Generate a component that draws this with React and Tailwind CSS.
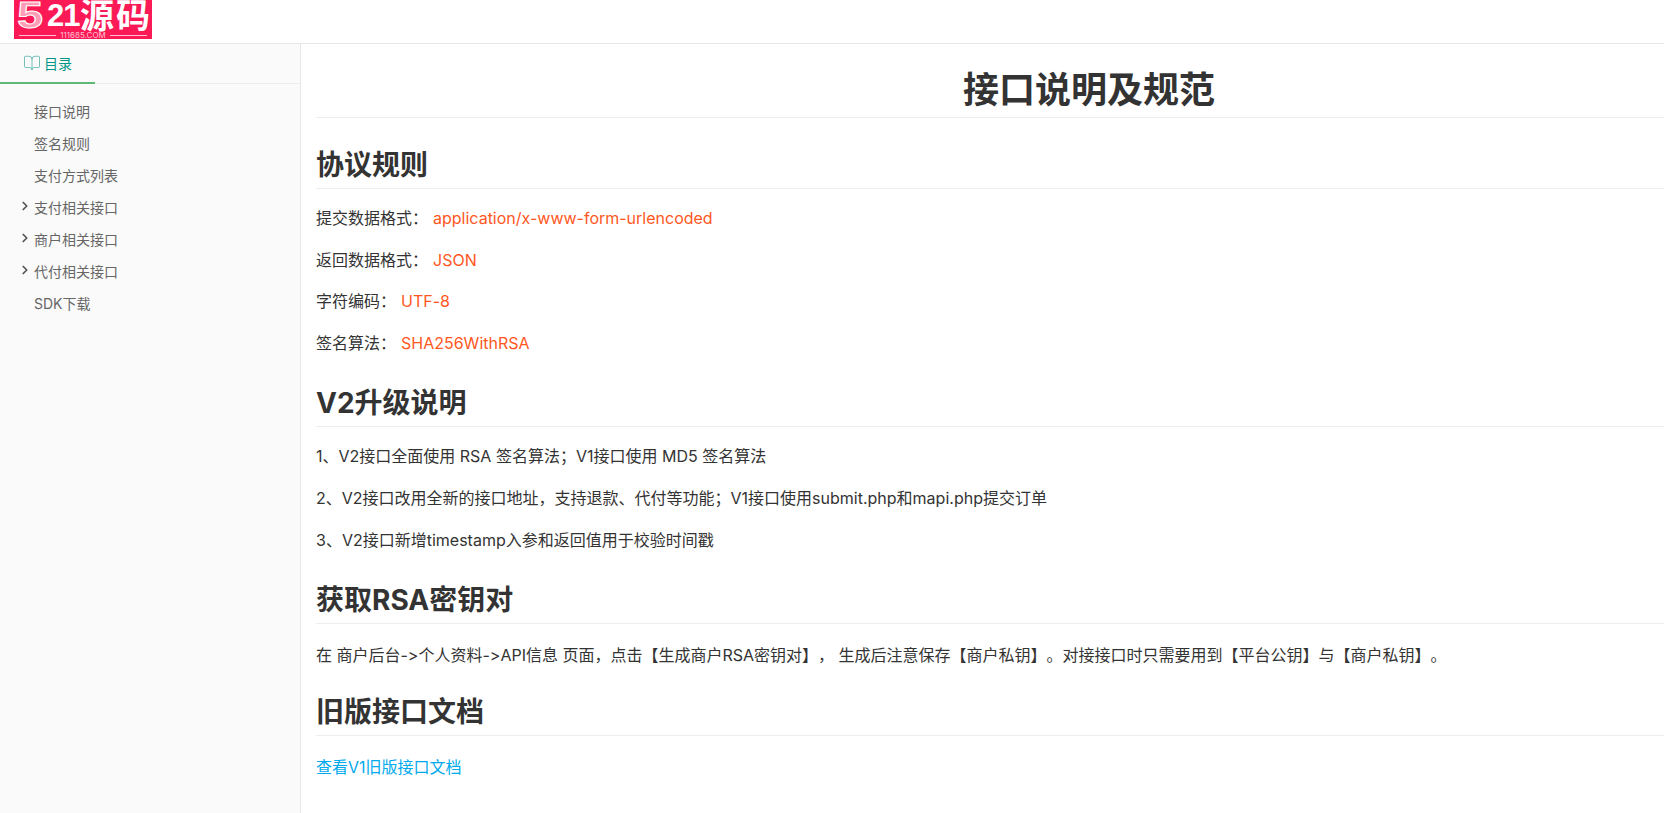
import { BookOpen, ChevronRight } from "lucide-react";

const menu = [
  { label: "接口说明" },
  { label: "签名规则" },
  { label: "支付方式列表" },
  { label: "支付相关接口", arrow: true },
  { label: "商户相关接口", arrow: true },
  { label: "代付相关接口", arrow: true },
  { label: "SDK下载" },
];

function Logo() {
  return (
    <div className="ml-[14px] flex h-[39px] w-[138px] flex-col items-center bg-[#fb1a56] text-white">
      <div className="flex h-[31px] w-full items-center pl-[4px] font-bold">
        <span className="mr-[5px] w-[24px] scale-x-125 text-center font-['Liberation_Sans'] text-[37px] leading-[31px] text-[#ff9db6] [-webkit-text-stroke:1px_white]">5</span>
        <span className="mr-[2px] w-[31px] font-['Liberation_Sans'] text-[31px] leading-[31px] tracking-[-1px]">21</span>
        <span className="text-[34px] leading-[31px] tracking-[2px]">源码</span>
      </div>
      <div className="flex h-[8px] w-[128px] items-center gap-1 text-[8px] leading-[8px] text-[#ffc0d0]">
        <span className="h-px flex-1 bg-[#ffc0d0]" />
        <span>111685.COM</span>
        <span className="h-px flex-1 bg-[#ffc0d0]" />
      </div>
    </div>
  );
}

function Sidebar() {
  return (
    <aside className="w-[301px] shrink-0 border-r border-[#e6e6e6] bg-[#fafafa]">
      <div className="h-[40px] border-b border-[#eeeeee]">
        <div className="flex h-[40px] w-[95px] items-center border-b-2 border-[#5fb878] pl-[23px] text-[14px] text-[#009688]">
          <BookOpen className="mr-[3px] h-[18px] w-[18px] text-[#6cbcb4]" strokeWidth={1.25} />
          目录
        </div>
      </div>
      <ul className="pt-[12px]">
        {menu.map((item) => (
          <li key={item.label} className="relative h-8 pl-[34px] text-[14px] leading-8 text-[#666666]">
            {item.arrow && (
              <ChevronRight className="absolute left-[18px] top-[7px] h-[14px] w-[14px] text-[#555555]" strokeWidth={3} />
            )}
            {item.label}
          </li>
        ))}
      </ul>
    </aside>
  );
}

function H2({ children, className = "mt-[26px]" }) {
  return (
    <h2 className={`mb-[17px] border-b border-[#eeeeee] pb-[3px] pt-px text-[28px] font-bold leading-[40px] text-[#333333] ${className}`}>
      {children}
    </h2>
  );
}

function P({ children, className = "my-4" }) {
  return <p className={`text-[16px] leading-[25.6px] text-[#333333] ${className}`}>{children}</p>;
}

function Val({ children }) {
  return <span className="ml-[5px] text-[#ff5722]">{children}</span>;
}

export default function App() {
  return (
    <div
      className="flex h-[813px] flex-col overflow-hidden bg-white [font-feature-settings:'calt'_0] [text-spacing-trim:space-all]"
      style={{ fontFamily: 'Inter, "Noto Sans CJK SC", sans-serif' }}
    >
      <header className="h-[44px] shrink-0 border-b border-[#e6e6e6] bg-white">
        <Logo />
      </header>
      <div className="flex min-h-0 flex-1">
        <Sidebar />
        <main className="min-w-0 flex-1 pl-[15px]">
          <h1 className="mt-[18px] border-b border-[#eeeeee] pl-[198px] pt-px text-center text-[36px] font-bold leading-[54px] text-[#333333]">
            接口说明及规范
          </h1>
          <H2>协议规则</H2>
          <P>提交数据格式：<Val>application/x-www-form-urlencoded</Val></P>
          <P>返回数据格式：<Val>JSON</Val></P>
          <P>字符编码：<Val>UTF-8</Val></P>
          <P>签名算法：<Val>SHA256WithRSA</Val></P>
          <H2>V2升级说明</H2>
          <P>1、V2接口全面使用 RSA 签名算法；V1接口使用 MD5 签名算法</P>
          <P>2、V2接口改用全新的接口地址，支持退款、代付等功能；V1接口使用submit.php和mapi.php提交订单</P>
          <P>3、V2接口新增timestamp入参和返回值用于校验时间戳</P>
          <H2>获取RSA密钥对</H2>
          <P className="mt-[19px] mb-4">在 商户后台-&gt;个人资料-&gt;API信息 页面，点击【生成商户RSA密钥对】， 生成后注意保存【商户私钥】。对接接口时只需要用到【平台公钥】与【商户私钥】。</P>
          <H2 className="mt-[22px]">旧版接口文档</H2>
          <P className="mt-[19px] mb-4"><span className="text-[#01aaed]">查看V1旧版接口文档</span></P>
        </main>
      </div>
    </div>
  );
}
